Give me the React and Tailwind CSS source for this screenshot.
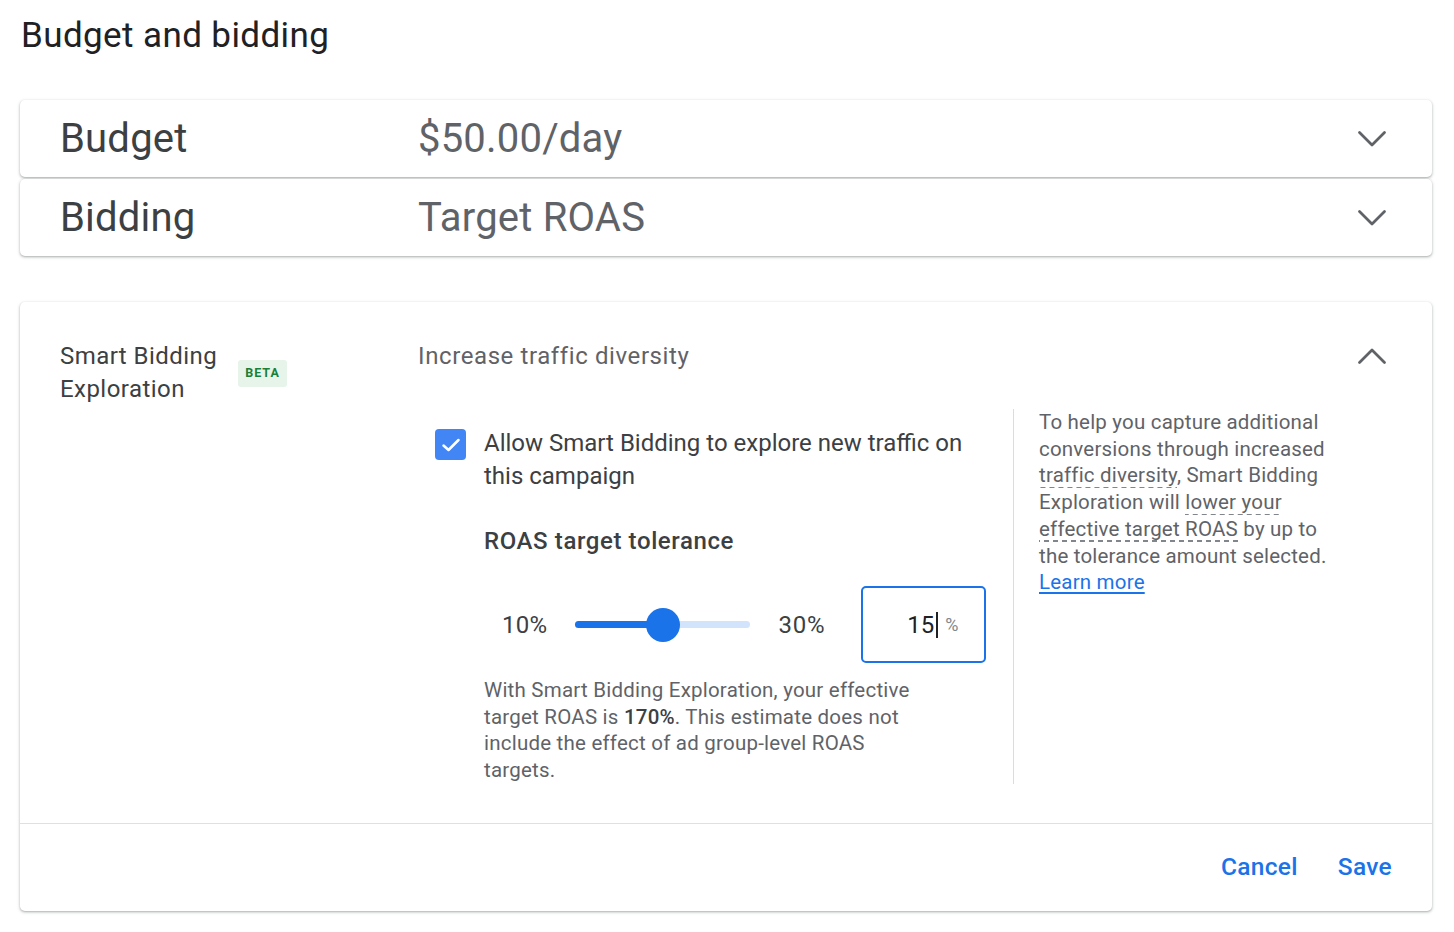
import React from "react";

const font = { fontFamily: "Roboto, 'Liberation Sans', sans-serif" };

function Chevron({ up = false }) {
  return (
    <svg width="30" height="18" viewBox="0 0 30 18" fill="none" className="block">
      <path
        d={up ? "M2.5 15.5 L15 3 L27.5 15.5" : "M2.5 2.5 L15 15 L27.5 2.5"}
        stroke="#5f6368"
        strokeWidth="2.8"
        strokeLinecap="round"
        strokeLinejoin="round"
      />
    </svg>
  );
}

function SummaryCard({ label, value }) {
  return (
    <div className="flex items-center h-[77px] pl-[40px] pr-[45px] bg-white rounded-[5px] shadow-[0_1px_2px_0_rgba(60,64,67,0.3),0_1px_3px_1px_rgba(60,64,67,0.12)]">
      <div className="w-[358px] text-[40px] leading-[48px] text-[#3c4043] tracking-[0.2px]">{label}</div>
      <div className="flex-1 text-[40px] leading-[48px] text-[#5f6368] tracking-[0.2px]">{value}</div>
      <Chevron />
    </div>
  );
}

const dash =
  "bg-[linear-gradient(to_right,#80868b_60%,transparent_60%)] bg-[length:9px_1.5px] bg-repeat-x bg-bottom pb-[1px]";

export default function App() {
  return (
    <div style={font} className="w-[1454px] min-h-[932px] bg-white pl-[20px] pr-[22px] pt-[14px]">
      <h1 className="pl-[1px] text-[35px] leading-[44px] text-[#202124] font-normal tracking-[0.4px]">Budget and bidding</h1>

      <div className="mt-[42px] flex flex-col gap-[2px]">
        <SummaryCard label="Budget" value="$50.00/day" />
        <SummaryCard label="Bidding" value="Target ROAS" />
      </div>

      <div className="mt-[46px] bg-white rounded-[5px] shadow-[0_1px_2px_0_rgba(60,64,67,0.3),0_1px_3px_1px_rgba(60,64,67,0.12)]">
        <div className="flex pl-[40px] pr-[45px] pt-[38px] pb-[39px]">
          <div className="w-[358px] flex items-center self-start">
            <div className="w-[172px] text-[24px] leading-[33px] text-[#3c4043] tracking-[0.45px]">Smart Bidding Exploration</div>
            <span className="ml-[6px] inline-flex items-center justify-center w-[49px] h-[27px] rounded-[3px] bg-[#e6f4ea] text-[#188038] text-[12.5px] font-bold tracking-[0.08em]">
              BETA
            </span>
          </div>

          <div className="flex-1">
            <div className="text-[24px] leading-[33px] text-[#5f6368] tracking-[0.6px]">Increase traffic diversity</div>

            <div className="mt-[36px] flex">
              <div className="w-[595px] pl-[17px] pt-[18px]">
                <div className="flex items-start gap-[18px]">
                  <div className="mt-[2px] w-[31px] h-[31px] shrink-0 rounded-[4px] bg-[#4285f4] flex items-center justify-center">
                    <svg width="20" height="16" viewBox="0 0 20 16" fill="none">
                      <path d="M2.5 8.5 L7.5 13 L17.5 3" stroke="white" strokeWidth="2.5" strokeLinecap="round" strokeLinejoin="round" />
                    </svg>
                  </div>
                  <div className="text-[24px] leading-[33px] text-[#3c4043]">
                    Allow Smart Bidding to explore new traffic on
                    <br />
                    this campaign
                  </div>
                </div>

                <div className="pl-[49px]">
                  <div className="mt-[32px] text-[24px] leading-[33px] font-medium text-[#3c4043] tracking-[0.6px]">ROAS target tolerance</div>

                  <div className="mt-[28px] flex items-center">
                    <span className="ml-[18px] text-[24px] text-[#3c4043] tracking-[0.3px]">10%</span>
                    <div className="ml-[28px] relative w-[175px] h-[7px] rounded-full bg-[#d2e3fc]">
                      <div className="w-[88px] h-[7px] rounded-full bg-[#1a73e8]" />
                      <div className="absolute left-[88px] top-1/2 -translate-x-1/2 -translate-y-1/2 w-[34px] h-[34px] rounded-full bg-[#1a73e8]" />
                    </div>
                    <span className="ml-[28px] text-[24px] text-[#3c4043] tracking-[0.8px]">30%</span>
                    <div className="ml-[36px] w-[125px] h-[77px] rounded-[5px] border-2 border-[#1a73e8] flex items-center justify-end pr-[26px]">
                      <span className="text-[24px] text-[#202124]">15</span>
                      <span className="ml-[2px] w-[2px] h-[26px] bg-[#202124]" />
                      <span className="ml-[7px] text-[18px] text-[#80868b]">%</span>
                    </div>
                  </div>

                  <p className="mt-[14px] w-[450px] text-[20.5px] leading-[26.7px] text-[#5f6368] tracking-[0.22px]">
                    With Smart Bidding Exploration, your effective target ROAS is{" "}
                    <span className="text-[#3c4043] font-medium">170%</span>. This estimate does not include the effect of ad group-level ROAS targets.
                  </p>
                </div>
              </div>

              <div className="border-l border-[#dadce0] pl-[25px] w-[325px]">
                <p className="text-[20.5px] leading-[26.7px] text-[#5f6368] tracking-[0.2px]">
                  To help you capture additional conversions through increased{" "}
                  <span className={dash}>traffic diversity</span>, Smart Bidding Exploration will{" "}
                  <span className={dash}>lower your</span>{" "}
                  <span className={dash}>effective target ROAS</span> by up to the tolerance amount selected.{" "}
                  <a href="#" className="text-[#1a73e8] underline underline-offset-[3px]">Learn more</a>
                </p>
              </div>
            </div>
          </div>

          <div className="self-start pt-[7px]">
            <Chevron up />
          </div>
        </div>

        <div className="border-t border-[#e0e0e0] h-[88px] flex items-center justify-end gap-[40px] pr-[40px]">
          <button className="text-[24.5px] font-medium text-[#1a73e8] tracking-[0.3px]">Cancel</button>
          <button className="text-[24.5px] font-medium text-[#1a73e8] tracking-[0.3px]">Save</button>
        </div>
      </div>
    </div>
  );
}
